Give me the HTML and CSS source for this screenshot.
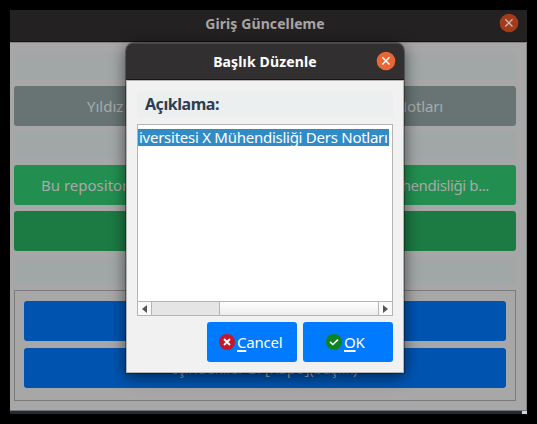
FILE: index.html
```html
<!DOCTYPE html>
<html lang="tr">
<head>
<meta charset="utf-8">
<title>Giriş Güncelleme</title>
<link rel="stylesheet" href="styles.css">
</head>
<body>
<div class="window">
  <header class="titlebar"><span class="title main-title">Giriş Güncelleme</span>
    <svg class="close" viewBox="0 0 20 20"><circle cx="10" cy="10" r="9.3" fill="#a53c19"/><path d="M6.3 6.3l7.2 7.2M13.5 6.3l-7.2 7.2" stroke="#c5bdb9" stroke-width="1.3"/></svg>
  </header>
  <main class="content">
    <div class="band"></div>
    <div class="row gray"><span class="t-yildiz">Yıldız</span><span class="t-notlari">Notları</span></div>
    <div class="band"></div>
    <div class="row green"><span class="t-repo">Bu repository</span><span class="t-muh">Mühendisliği b...</span></div>
    <div class="row dark-green"></div>
    <div class="band"></div>
    <div class="frame">
      <div class="row blue"></div>
      <div class="row blue"><span class="t-toc">İçindekiler Bi [Kapo](başlık)</span></div>
    </div>
  </main>
</div>
<div class="strip"><i></i></div>
<section class="dialog">
  <header class="dialog-bar"><span class="title dialog-title">Başlık Düzenle</span>
    <svg class="close" viewBox="0 0 20 20"><circle cx="10" cy="10" r="9.3" fill="#e96637"/><path d="M6.3 6.3l7.2 7.2M13.5 6.3l-7.2 7.2" stroke="#fff" stroke-width="1.4"/></svg>
  </header>
  <div class="dialog-body">
    <div class="label"><span>Açıklama:</span></div>
    <div class="editor">
      <div class="line"><span>iversitesi X Mühendisliği Ders Notları</span></div>
      <div class="scroll">
        <b class="arrow"><svg viewBox="0 0 5 8"><path d="M5 0v8L0 4z"/></svg></b><b class="thumb"></b><b class="track"></b><b class="arrow right"><svg viewBox="0 0 5 8"><path d="M0 0v8l5-4z"/></svg></b>
      </div>
    </div>
    <div class="actions">
      <button class="cancel"><svg viewBox="0 0 16 16"><circle cx="8" cy="8" r="8" fill="#c7162b"/><path d="M5 5l6 6M11 5l-6 6" stroke="#fff" stroke-width="1.9"/></svg><span><u>C</u>ancel</span></button>
      <button class="ok"><svg viewBox="0 0 16 16"><circle cx="8" cy="8" r="8" fill="#0e8420"/><path d="M4 7.8l2.8 2.7L12 5.6" fill="none" stroke="#fff" stroke-width="1.6"/></svg><span><u>O</u>K</span></button>
    </div>
  </div>
</section>
</body>
</html>
```
FILE: styles.css
```css
* { box-sizing: border-box; }
body { margin: 0; padding: 10px; width: 537px; height: 424px; background: #000; overflow: hidden; position: relative; font: 15px/20px "Noto Sans", "Open Sans", sans-serif; }
span { white-space: pre; }
.window { width: 517px; height: 401px; background: #a7a7a7; border-right: 1px solid #858585; border-bottom: 1px solid #777; }
.titlebar { width: 517px; height: 33px; background: #242122; border-bottom: 1px solid #858585; box-shadow: inset 0 -1px #141313; position: relative; display: flex; justify-content: center; padding-top: 4px; }
.title { font-weight: 700; font-size: 14px; letter-spacing: .1px; }
.main-title { color: #a8a5a5; margin-right: 7px; }
.close { position: absolute; width: 20px; height: 20px; right: 8px; top: 3px; }
.content { padding: 10px 10px 0 4px; display: flex; flex-direction: column; gap: 6px; }
.band { height: 27px; background: #a1a6a7; border-radius: 4px; }
.row { height: 40px; border-radius: 3px; display: flex; align-items: center; justify-content: space-between; color: #a7aaa9; flex: none; }
.gray { background: #677473; padding: 0 73px; }
.green { background: #228f50; padding: 0 27px; }
.t-notlari { letter-spacing: -.15px; }
.t-muh { letter-spacing: -.4px; }
.t-toc { letter-spacing: -.2px; }
.dark-green { background: #1c7a43; }
.frame { border: 1px solid #7b7b7b; height: 111px; padding: 10px 9px; display: flex; flex-direction: column; gap: 7px; }
.blue { background: #0054b0; justify-content: center; }
.strip { width: 517px; height: 3px; background: #1e2b37; display: flex; justify-content: flex-end; }
.strip i { width: 5px; background: #d5d5d5; }
.dialog { position: absolute; left: 126px; top: 43px; width: 278px; height: 330px; border-radius: 8px 8px 0 0; background: #f1f1f1; box-shadow: 0 0 0 1px rgba(0,0,0,.3), 0 3px 16px rgba(0,0,0,.6); }
.dialog-bar { height: 37px; border-radius: 7px 7px 0 0; background: #322f30; border-bottom: 1px solid #191818; box-shadow: inset 0 1px #4b4849; position: relative; display: flex; justify-content: center; padding-top: 9px; }
.dialog-title { color: #fff; letter-spacing: .15px; }
.dialog-bar .close { top: 8px; }
.dialog-body { height: 293px; border: 1px solid #b5b5b5; padding: 10px; }
.label { height: 27px; background: #ebefef; border-radius: 4px; padding: 3px 8px; color: #2c3e50; font-weight: 700; font-size: 16px; letter-spacing: -.45px; }
.editor { height: 192px; margin-top: 6px; border: 1px solid #b4b4b4; background: #fff; display: flex; flex-direction: column; justify-content: space-between; padding-top: 4px; }
.line { width: 251px; height: 17px; background: #308cc6; color: #fff; line-height: 17px; letter-spacing: -.26px; padding-left: 1px; }
.scroll { height: 14px; border-top: 1px solid #b4b4b4; display: flex; }
.arrow { width: 14px; border-right: 1px solid #b4b4b4; display: flex; align-items: center; justify-content: center; background: #fafafa; }
.arrow svg { width: 5px; height: 8px; fill: #555; }
.arrow.right { width: 14px; border-right: 0; border-left: 1px solid #b4b4b4; }
.thumb { width: 68px; background: #e5e5e5; border-right: 1px solid #b4b4b4; }
.track { flex: 1; background: linear-gradient(#fff, #ececec); }
.actions { display: flex; justify-content: flex-end; gap: 6px; margin-top: 6px; }
button { width: 90px; height: 40px; border: 0; border-radius: 3px; background: #007bff; color: #fff; font: inherit; letter-spacing: -.2px; display: flex; align-items: center; padding: 0 0 0 12px; gap: 2px; }
button svg { width: 16px; height: 16px; flex: none; }
.ok { padding-left: 23px; }
u { text-decoration-thickness: 2px; text-underline-offset: 2px; text-decoration-skip-ink: none; }
```
